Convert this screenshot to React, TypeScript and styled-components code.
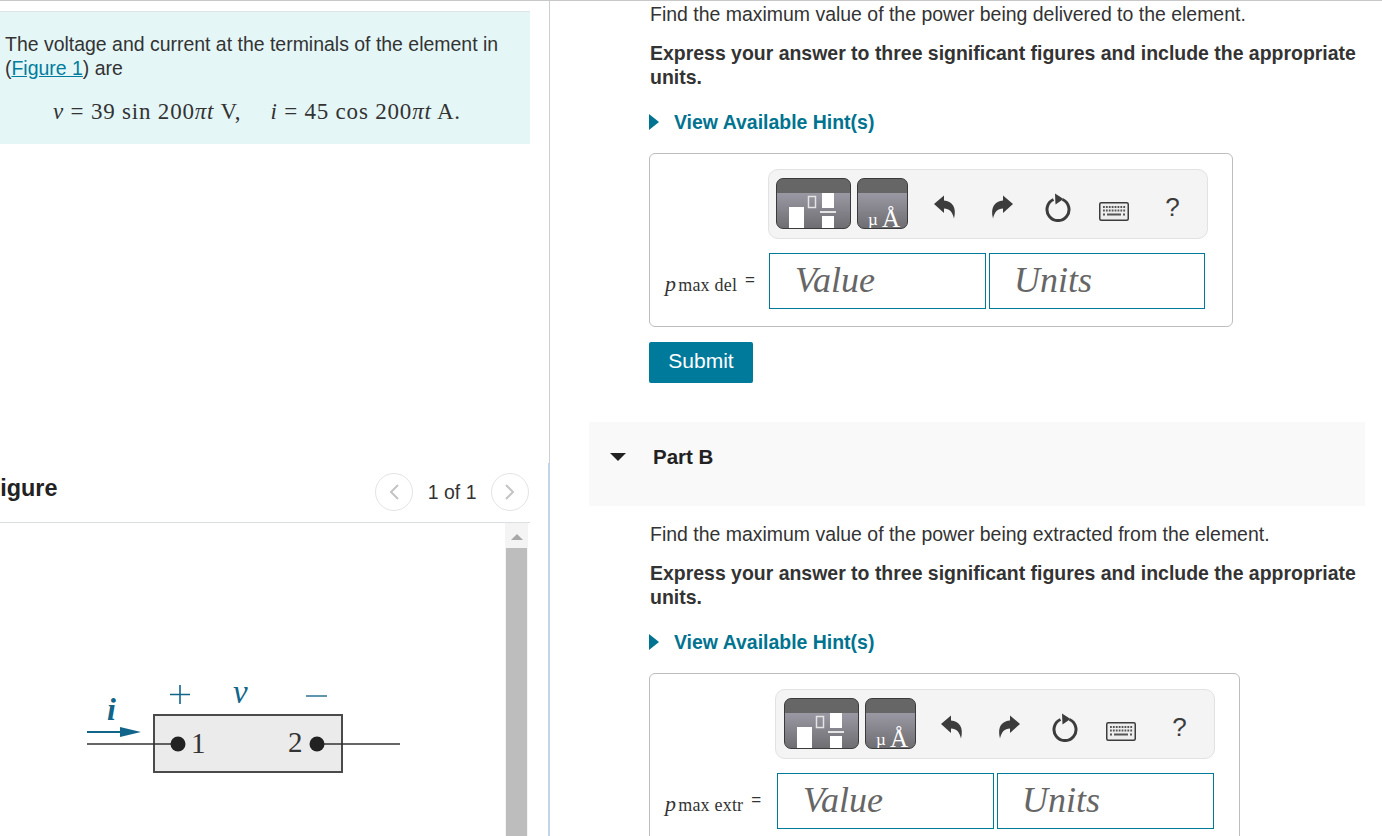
import React from "react";
import styled, { createGlobalStyle } from "styled-components";

const Global = createGlobalStyle`
  html, body { margin: 0; padding: 0; height: 836px; overflow: hidden; background: #fff; }
  #root { height: 836px; overflow: hidden; }
  * { box-sizing: border-box; }
`;

const Page = styled.div`
  display: grid;
  grid-template-columns: 550px 1fr;
  height: 836px;
  overflow: hidden;
  border-top: 1px solid #c8c8c8;
  font-family: "Liberation Sans", Arial, sans-serif;
  font-size: 19.47px;
  line-height: 24px;
  color: #333;
`;

const LeftColumn = styled.div`
  display: flex;
  flex-direction: column;
  min-width: 0;
  overflow: hidden;
`;

const LeftTop = styled.section`
  height: 462px;
  padding-top: 10px;
  border-right: 1px solid #ccd0d4;
`;

const Intro = styled.div`
  width: 530px;
  height: 133px;
  padding: 20px 5px 0;
  background: #e5f6f7;
  border-top: 1px solid #dde3e6;
`;

const Para = styled.p`
  margin: 0;
`;

const FigureLink = styled.a`
  color: #007c9e;
  text-decoration: underline;
`;

const Formula = styled.div`
  margin: 20px 0 0 48px;
  display: flex;
  gap: 29px;
  font-family: "Liberation Serif", "DejaVu Serif", serif;
  font-size: 23px;
  letter-spacing: 0.8px;
  line-height: 24px;
  white-space: nowrap;
  color: #333;
`;

const MathVar = styled.i`
  font-style: italic;
`;

const LeftBottom = styled.section`
  flex: 1;
  min-height: 0;
  display: flex;
  flex-direction: column;
  border-right: 2px solid #c5d5e6;
`;

const FigureHeader = styled.div`
  width: 530px;
  height: 60px;
  display: flex;
  align-items: center;
  justify-content: space-between;
  padding-right: 1px;
  border-bottom: 1px solid #dcdfe2;
`;

const FigureTitle = styled.h2`
  margin: -10px 0 0 -14px;
  font-size: 23.4px;
  font-weight: 700;
  color: #222;
`;

const Pager = styled.div`
  display: flex;
  align-items: center;
  gap: 14.5px;
  margin-top: -1px;
`;

const PagerButton = styled.span`
  width: 38px;
  height: 38px;
  border-radius: 50%;
  border: 1px solid #e4e4e4;
  display: flex;
  align-items: center;
  justify-content: center;
`;

const FigureBody = styled.div`
  width: 528px;
  flex: 1;
  display: flex;
  min-height: 0;
`;

const FigureCanvas = styled.div`
  flex: 1;
  padding: 147px 0 0 80px;
`;

const Scrollbar = styled.div`
  width: 23px;
  display: flex;
  flex-direction: column;
  align-items: center;
  background: #f4f4f4;
  padding-top: 11px;
`;

const ScrollArrow = styled.span`
  width: 0;
  height: 0;
  border-left: 6px solid transparent;
  border-right: 6px solid transparent;
  border-bottom: 6px solid #a8a8a8;
`;

const ScrollThumb = styled.div`
  width: 21px;
  flex: 1;
  margin-top: 8px;
  background: #bdbdbd;
`;

const RightColumn = styled.main`
  min-width: 0;
  overflow: hidden;
  padding: 1px 17px 0 39px;
`;

const PartBody = styled.div`
  padding-left: 61px;
`;

const BoldPara = styled.p`
  margin: 15px 0 0;
  font-weight: 700;
`;

const Hint = styled.div`
  display: flex;
  align-items: center;
  gap: 15px;
  margin: 21px 0 0 -1px;
  color: #007391;
  font-weight: 700;
`;

const HintArrow = styled.span`
  width: 0;
  height: 0;
  border-top: 8px solid transparent;
  border-bottom: 8px solid transparent;
  border-left: 10px solid #007391;
`;

const AnswerBox = styled.div`
  display: grid;
  grid-template-columns: auto auto;
  width: fit-content;
  margin: 19px 0 0 -1px;
  padding: 15px 24px 17px 15px;
  border: 1px solid #bdbdbd;
  border-radius: 6px;
`;

const Toolbar = styled.div<{ $shift: number }>`
  grid-column: 2;
  width: 440px;
  height: 70px;
  margin-left: -${(p) => p.$shift}px;
  padding: 8px 0 0 ${(p) => 6 + p.$shift}px;
  display: flex;
  align-items: flex-start;
  background: #f4f4f4;
  border: 1px solid #e2e2e2;
  border-radius: 10px;
`;

const TemplateButton = styled.span<{ $w: number }>`
  width: ${(p) => p.$w}px;
  height: 51px;
  margin-right: 6px;
  display: block;
  flex: none;
  border-radius: 7px;
  overflow: hidden;
  border: 1px solid #3a3a3a;
  background: linear-gradient(#666 0 14px, #9a98a3 14px, #6f6e72);
`;

const ToolIcons = styled.div<{ $shift: number }>`
  display: flex;
  margin-left: ${(p) => 3 - p.$shift}px;
  height: 58px;
`;

const ToolCell = styled.span`
  width: 57px;
  display: flex;
  align-items: center;
  justify-content: center;
  color: #3c3c3c;
`;

const KeyboardCell = styled(ToolCell)`
  padding: 8px 4px 0 0;
`;

const ResetCell = styled(ToolCell)`
  padding-right: 2px;
`;

const HelpMark = styled.span`
  font-size: 26px;
  color: #3c3c3c;
`;

const AnswerLabel = styled.div<{ $w: number }>`
  grid-row: 2;
  width: ${(p) => p.$w}px;
  display: flex;
  align-items: center;
  gap: 8px;
  height: 56px;
  margin-top: 14px;
  padding-top: 7px;
  font-family: "Liberation Serif", serif;
  font-size: 18px;
  letter-spacing: 0.2px;
  white-space: nowrap;
`;

const LabelVar = styled.i`
  margin-right: 2px;
  font-size: 22px;
`;

const LabelEquals = styled.span`
  margin-top: -9px;
  font-family: "Liberation Sans", sans-serif;
  font-size: 17px;
`;

const Inputs = styled.div`
  grid-row: 2;
  grid-column: 2;
  display: flex;
  gap: 3px;
  margin-top: 14px;
`;

const InputBox = styled.div<{ $pad: number; $w: number }>`
  width: ${(p) => p.$w}px;
  height: 56px;
  padding-left: ${(p) => p.$pad}px;
  border: 1px solid #007a9b;
  font-family: "Liberation Serif", serif;
  font-style: italic;
  font-size: 36px;
  line-height: 52px;
  color: #666;
`;

const Submit = styled.button`
  display: block;
  width: 104px;
  height: 41px;
  margin: 15px 0 0 -1px;
  padding: 0 0 3px;
  border: 0;
  border-radius: 2px;
  background: #007a9b;
  color: #fff;
  font: 500 21px/24px "Liberation Sans", sans-serif;
`;

const PartHeader = styled.div`
  display: flex;
  align-items: flex-start;
  gap: 27px;
  height: 84px;
  margin-top: 39px;
  padding: 22px 0 0 21px;
  background: #f9f9f9;
`;

const Caret = styled.span`
  width: 0;
  height: 0;
  margin-top: 9px;
  border-left: 8px solid transparent;
  border-right: 8px solid transparent;
  border-top: 8px solid #222;
`;

const PartTitle = styled.strong`
  margin-top: 1px;
  font-size: 20.5px;
  color: #222;
`;

const PartFirst = styled.p`
  margin: 16px 0 0;
`;

const Undo = ({ flip }: { flip?: boolean }) => (
  <svg width="24" height="26" viewBox="0 0 24 26" style={flip ? { transform: "scaleX(-1)" } : undefined}>
    <path d="M1 10 L11 1.5 V6.5 C19 7 24 13 21 24.5 C19.5 18 16.5 14.5 11 14.5 V19 Z" fill="currentColor" />
  </svg>
);

const Reset = () => (
  <svg width="28" height="30" viewBox="0 0 28 30">
    <path d="M9.5 7.5 A11 11 0 1 0 18.5 7.5" fill="none" stroke="currentColor" strokeWidth="3" />
    <path d="M11 1.5 L19.5 7 L11.5 12.5 Z" fill="currentColor" />
  </svg>
);

const Keyboard = () => (
  <svg width="30" height="19" viewBox="0 0 30 19">
    <rect x="0.75" y="0.75" width="28.5" height="17.5" rx="1.5" fill="#eee" stroke="currentColor" strokeWidth="1.5" />
    {[0, 1, 2, 3, 4, 5, 6, 7].map((n) => (
      <rect key={n} x={4 + n * 2.9} y="4" width="1.8" height="2" fill="#555" />
    ))}
    {[0, 1, 2, 3, 4, 5, 6, 7].map((n) => (
      <rect key={n} x={4 + n * 2.9} y="7.5" width="1.8" height="2" fill="#555" />
    ))}
    <rect x="4" y="11.5" width="2" height="2" fill="#555" />
    <rect x="8" y="11.5" width="14" height="2" fill="#555" />
    <rect x="24" y="11.5" width="2" height="2" fill="#555" />
  </svg>
);

const FractionIcon = () => (
  <svg width="73" height="49" viewBox="0 0 73 49" style={{ display: "block" }}>
    <rect x="12" y="28" width="15" height="21" fill="#fff" />
    <rect x="31.5" y="17.5" width="7" height="11" fill="none" stroke="#e4e4e4" strokeWidth="1.5" />
    <rect x="45" y="14" width="12" height="15" fill="#fff" />
    <rect x="43" y="32" width="16" height="2" fill="#e4e4e4" />
    <rect x="45" y="37" width="12" height="12" fill="#fff" />
  </svg>
);

const UnitIcon = () => (
  <svg width="49" height="49" viewBox="0 0 49 49" style={{ display: "block" }}>
    <text x="10" y="46" fontFamily="Liberation Serif, serif" fontSize="17" fill="#fff">µ</text>
    <text x="24" y="48" fontFamily="Liberation Serif, serif" fontSize="25" fill="#fff">Å</text>
  </svg>
);

const Chevron = ({ left }: { left?: boolean }) => (
  <svg width="12" height="18" viewBox="0 0 12 18">
    <path d={left ? "M10 2 L3 9 L10 16" : "M2 2 L9 9 L2 16"} fill="none" stroke="#c4c4c4" strokeWidth="2" />
  </svg>
);

const Circuit = () => (
  <svg width="330" height="110" viewBox="0 -5 330 110">
    <rect x="74" y="40" width="188" height="57" fill="#ebebeb" stroke="#4a4a4a" strokeWidth="2" />
    <path d="M7 69 H98 M237 69 H320" stroke="#333" strokeWidth="1.6" />
    <path d="M7 57 H44" stroke="#12658a" strokeWidth="2" />
    <path d="M40 52 L61 57 L40 62 Z" fill="#12658a" />
    <circle cx="98" cy="69" r="7.5" fill="#222" />
    <circle cx="237" cy="69" r="7.5" fill="#222" />
    <text x="111" y="78" fontFamily="Liberation Serif, serif" fontSize="29" fill="#333">1</text>
    <text x="208" y="77" fontFamily="Liberation Serif, serif" fontSize="29" fill="#333">2</text>
    <path d="M100 10 V29 M90 19.5 H110" stroke="#12658a" strokeWidth="1.6" />
    <path d="M226 21 H247" stroke="#4d8aa6" strokeWidth="1.8" />
    <text x="153" y="28" fontFamily="Liberation Serif, serif" fontStyle="italic" fontSize="33" fill="#12658a">v</text>
    <text x="27" y="45" fontFamily="Liberation Serif, serif" fontStyle="italic" fontSize="32" fontWeight="700" fill="#12658a">i</text>
  </svg>
);

function Part({ name, sub, labelWidth, shift, unitsWidth }: { name: string; sub: string; labelWidth: number; shift: number; unitsWidth: number }) {
  return (
    <AnswerBox>
      <Toolbar $shift={shift}>
        <TemplateButton $w={75}><FractionIcon /></TemplateButton>
        <TemplateButton $w={51}><UnitIcon /></TemplateButton>
        <ToolIcons $shift={shift}>
          <ToolCell><Undo /></ToolCell>
          <ToolCell><Undo flip /></ToolCell>
          <ResetCell><Reset /></ResetCell>
          <KeyboardCell><Keyboard /></KeyboardCell>
          <ToolCell><HelpMark>?</HelpMark></ToolCell>
        </ToolIcons>
      </Toolbar>
      <AnswerLabel $w={labelWidth}>
        <span><LabelVar>{name}</LabelVar>{sub}</span>
        <LabelEquals>=</LabelEquals>
      </AnswerLabel>
      <Inputs>
        <InputBox $pad={25} $w={217}>Value</InputBox>
        <InputBox $pad={24} $w={unitsWidth}>Units</InputBox>
      </Inputs>
    </AnswerBox>
  );
}

export default function App() {
  return (
    <Page>
      <Global />
      <LeftColumn>
        <LeftTop>
          <Intro>
            <Para>
              The voltage and current at the terminals of the element in
              <br />(<FigureLink>Figure 1</FigureLink>) are
            </Para>
            <Formula>
              <span><MathVar>v</MathVar> = 39 sin 200<MathVar>πt</MathVar> V,</span>
              <span><MathVar>i</MathVar> = 45 cos 200<MathVar>πt</MathVar> A.</span>
            </Formula>
          </Intro>
        </LeftTop>
        <LeftBottom>
          <FigureHeader>
            <FigureTitle>Figure</FigureTitle>
            <Pager>
              <PagerButton><Chevron left /></PagerButton>
              <span>1 of 1</span>
              <PagerButton><Chevron /></PagerButton>
            </Pager>
          </FigureHeader>
          <FigureBody>
            <FigureCanvas><Circuit /></FigureCanvas>
            <Scrollbar>
              <ScrollArrow />
              <ScrollThumb />
            </Scrollbar>
          </FigureBody>
        </LeftBottom>
      </LeftColumn>
      <RightColumn>
        <PartBody>
          <Para>Find the maximum value of the power being delivered to the element.</Para>
          <BoldPara>Express your answer to three significant figures and include the appropriate units.</BoldPara>
          <Hint><HintArrow />View Available Hint(s)</Hint>
          <Part name="p" sub="max del" labelWidth={104} shift={1} unitsWidth={216} />
          <Submit>Submit</Submit>
        </PartBody>
        <PartHeader>
          <Caret />
          <PartTitle>Part B</PartTitle>
        </PartHeader>
        <PartBody>
          <PartFirst>Find the maximum value of the power being extracted from the element.</PartFirst>
          <BoldPara>Express your answer to three significant figures and include the appropriate units.</BoldPara>
          <Hint><HintArrow />View Available Hint(s)</Hint>
          <Part name="p" sub="max extr" labelWidth={112} shift={2} unitsWidth={217} />
        </PartBody>
      </RightColumn>
    </Page>
  );
}
